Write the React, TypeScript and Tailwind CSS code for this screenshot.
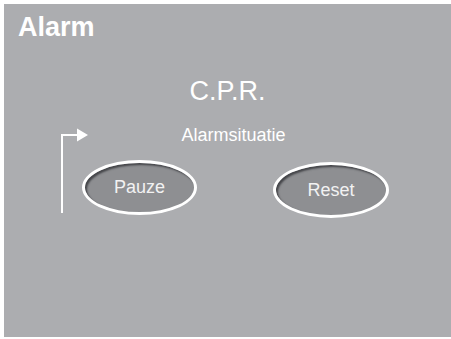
export default function App() {
  return (
    <div className="w-[451px] h-[339px] bg-white pt-[4px] pl-[4px] pb-[2px]" style={{ fontFamily: '"Liberation Sans", Arial, sans-serif' }}>
      <div className="relative h-full bg-[#acadb0] flex flex-col">
        <h1 className="mt-[10px] ml-[14px] text-[27px] leading-none font-bold text-white">Alarm</h1>

        <p className="mt-[37px] text-center text-[27px] leading-none text-white">C.P.R.</p>

        {/* arrow into the alarm situation */}
        <svg className="absolute left-[50px] top-[124px]" width="36" height="88" viewBox="0 0 36 88">
          <path d="M8 85 V7 H24" fill="none" stroke="#fff" strokeWidth="2" />
          <polygon points="23,0.5 34,7 23,13.5" fill="#fff" />
        </svg>

        <p className="mt-[21px] pl-[12px] text-center text-[18px] leading-none text-white">Alarmsituatie</p>

        <div className="mt-[16px] ml-[78px] flex items-start gap-[76px]">
          <button className="w-[115px] h-[55px] rounded-[50%] border-[3px] border-white bg-[#8e8f92] shadow-[inset_2px_2px_2px_#45464a] text-[18px] text-[#f2f2f2]">
            Pauze
          </button>
          <button className="mt-[2px] w-[116px] h-[56px] rounded-[50%] border-[3px] border-white bg-[#8e8f92] shadow-[inset_2px_2px_2px_#45464a] text-[18px] text-[#f2f2f2]">
            Reset
          </button>
        </div>
      </div>
    </div>
  );
}
